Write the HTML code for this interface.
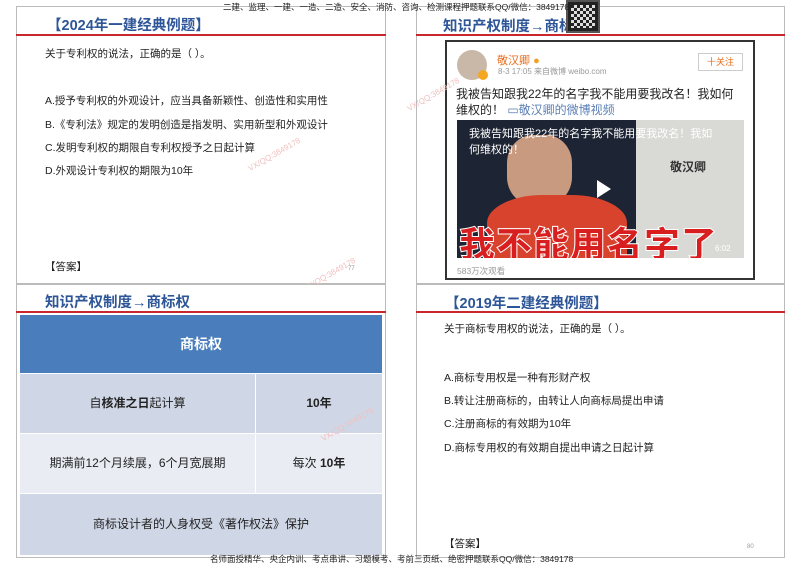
<!DOCTYPE html>
<html><head><meta charset="utf-8"><style>
*{margin:0;padding:0;box-sizing:border-box}
body{width:800px;height:566px;background:#fff;position:relative;overflow:hidden;font-family:"Liberation Sans","Noto Sans CJK SC",sans-serif;color:#222}
.a{position:absolute;white-space:nowrap}
.slide{position:absolute;border:1px solid #bbb;background:#fff}
.red{position:absolute;height:2px;background:#c8282d}
.tt{position:absolute;font-size:14.5px;font-weight:bold;color:#2d5597;white-space:nowrap}
.q{position:absolute;font-size:10.5px;color:#222;white-space:nowrap}
.wm{position:absolute;font-size:8px;color:#f0c0c0;transform:rotate(-30deg);white-space:nowrap}
</style></head><body>

<!-- TL -->
<div class="slide" style="left:16px;top:6px;width:370px;height:278px"></div>
<div class="tt" style="left:47px;top:14px">【2024年一建经典例题】</div>
<div class="red" style="left:16px;top:34px;width:370px"></div>
<div class="q" style="left:45px;top:46px">关于专利权的说法，正确的是（ ）。</div>
<div class="q" style="left:45px;top:93px">A.授予专利权的外观设计，应当具备新颖性、创造性和实用性</div>
<div class="q" style="left:45px;top:117px">B.《专利法》规定的发明创造是指发明、实用新型和外观设计</div>
<div class="q" style="left:45px;top:140px">C.发明专利权的期限自专利权授予之日起计算</div>
<div class="q" style="left:45px;top:163px">D.外观设计专利权的期限为10年</div>
<div class="q" style="left:45px;top:259px">【答案】</div>
<div class="a" style="left:348px;top:266px;font-size:6px;color:#999">77</div>
<div class="wm" style="left:245px;top:150px">VX/QQ:3849178</div>
<div class="wm" style="left:300px;top:270px">VX/QQ:3849178</div>

<!-- TR -->
<div class="slide" style="left:416px;top:6px;width:369px;height:278px"></div>
<div class="tt" style="left:443px;top:15px">知识产权制度→商标权</div>
<div class="a" style="left:566px;top:0;width:34px;height:33px;background:#222;border:2px solid #555"></div>
<div class="a" style="left:571px;top:5px;width:24px;height:23px;background:repeating-conic-gradient(#ddd 0 25%,#222 0 50%) 0 0/6px 6px"></div>
<div class="red" style="left:416px;top:34px;width:369px"></div>
<div class="a" style="left:445px;top:40px;width:310px;height:240px;border:2px solid #333;background:#fff"></div>
<div class="a" style="left:457px;top:50px;width:30px;height:30px;border-radius:50%;background:#c9b8a8"></div>
<div class="a" style="left:478px;top:70px;width:10px;height:10px;border-radius:50%;background:#f5a623"></div>
<div class="a" style="left:497px;top:52px;font-size:11px;color:#e86c1a">敬汉卿 <span style="color:#f0a020">●</span></div>
<div class="a" style="left:498px;top:66px;font-size:8px;color:#999">8-3 17:05  来自微博 weibo.com</div>
<div class="a" style="left:698px;top:53px;width:45px;height:18px;border:1px solid #ccc;font-size:9px;color:#e86c1a;text-align:center;line-height:16px">十关注</div>
<div class="a" style="left:456px;top:85px;font-size:12px;color:#222">我被告知跟我22年的名字我不能用要我改名！我如何</div>
<div class="a" style="left:456px;top:101px;font-size:12px;color:#222">维权的！ <span style="color:#5b7fb5">▭敬汉卿的微博视频</span></div>
<div class="a" style="left:457px;top:120px;width:287px;height:138px;background:#1d2433;overflow:hidden">
 <div class="a" style="left:179px;top:0;width:108px;height:138px;background:#d9d9d6"></div>
 <div class="a" style="left:213px;top:38px;font-size:12px;font-weight:bold;color:#333">敬汉卿</div>
 <div class="a" style="left:50px;top:15px;width:65px;height:70px;border-radius:40%;background:#c89a80"></div>
 <div class="a" style="left:30px;top:75px;width:140px;height:70px;border-radius:40% 40% 0 0;background:#d8432e"></div>
 <div class="a" style="left:12px;top:6px;font-size:11px;color:#fff;line-height:16px">我被告知跟我22年的名字我不能用要我改名！我如<br>何维权的！</div>
 <div class="a" style="left:140px;top:60px;width:0;height:0;border-left:14px solid #fff;border-top:9px solid transparent;border-bottom:9px solid transparent"></div>
 <div class="a" style="left:2px;top:96px;font-size:36px;font-weight:900;color:#d81e1e;letter-spacing:1px;-webkit-text-stroke:1px #fff">我不能用名字了</div>
 <div class="a" style="left:258px;top:124px;font-size:8px;color:#fff">6:02</div>
</div>
<div class="a" style="left:457px;top:265px;font-size:8.5px;color:#999">583万次观看</div>
<div class="wm" style="left:404px;top:90px">VX/QQ:3849178</div>

<!-- BL -->
<div class="slide" style="left:16px;top:284px;width:370px;height:274px"></div>
<div class="tt" style="left:45px;top:291px">知识产权制度→商标权</div>
<div class="red" style="left:16px;top:311px;width:370px"></div>
<div class="a" style="left:20px;top:315px;width:362px;height:58px;background:#4a7dbb;color:#fff;font-weight:bold;font-size:14px;text-align:center;line-height:58px">商标权</div>
<div class="a" style="left:20px;top:374px;width:235px;height:59px;background:#cfd7e6;font-size:12px;text-align:center;line-height:59px">自<b>核准之日</b>起计算</div>
<div class="a" style="left:256px;top:374px;width:126px;height:59px;background:#cfd7e6;font-size:12px;font-weight:bold;text-align:center;line-height:59px">10年</div>
<div class="a" style="left:20px;top:434px;width:235px;height:59px;background:#e9ecf3;font-size:12px;text-align:center;line-height:59px">期满前12个月续展，6个月宽展期</div>
<div class="a" style="left:256px;top:434px;width:126px;height:59px;background:#e9ecf3;font-size:12px;text-align:center;line-height:59px">每次 <b>10年</b></div>
<div class="a" style="left:20px;top:494px;width:362px;height:61px;background:#cfd7e6;font-size:12px;text-align:center;line-height:61px">商标设计者的人身权受《著作权法》保护</div>
<div class="wm" style="left:318px;top:420px">VX/QQ:3849178</div>

<!-- BR -->
<div class="slide" style="left:416px;top:284px;width:369px;height:274px"></div>
<div class="tt" style="left:445px;top:292px">【2019年二建经典例题】</div>
<div class="red" style="left:416px;top:311px;width:369px"></div>
<div class="q" style="left:444px;top:321px">关于商标专用权的说法，正确的是（ ）。</div>
<div class="q" style="left:444px;top:370px">A.商标专用权是一种有形财产权</div>
<div class="q" style="left:444px;top:393px">B.转让注册商标的，由转让人向商标局提出申请</div>
<div class="q" style="left:444px;top:416px">C.注册商标的有效期为10年</div>
<div class="q" style="left:444px;top:440px">D.商标专用权的有效期自提出申请之日起计算</div>
<div class="q" style="left:444px;top:536px">【答案】</div>
<div class="a" style="left:747px;top:544px;font-size:6px;color:#999">80</div>

<div class="a" style="left:223px;top:1px;font-size:8.5px;color:#222">二建、监理、一建、一造、二造、安全、消防、咨询、检测课程押题联系QQ/微信：3849178</div>
<div class="a" style="left:210px;top:553px;font-size:8.5px;color:#222">名师面授精华、央企内训、考点串讲、习题模考、考前三页纸、绝密押题联系QQ/微信：3849178</div>
</body></html>
